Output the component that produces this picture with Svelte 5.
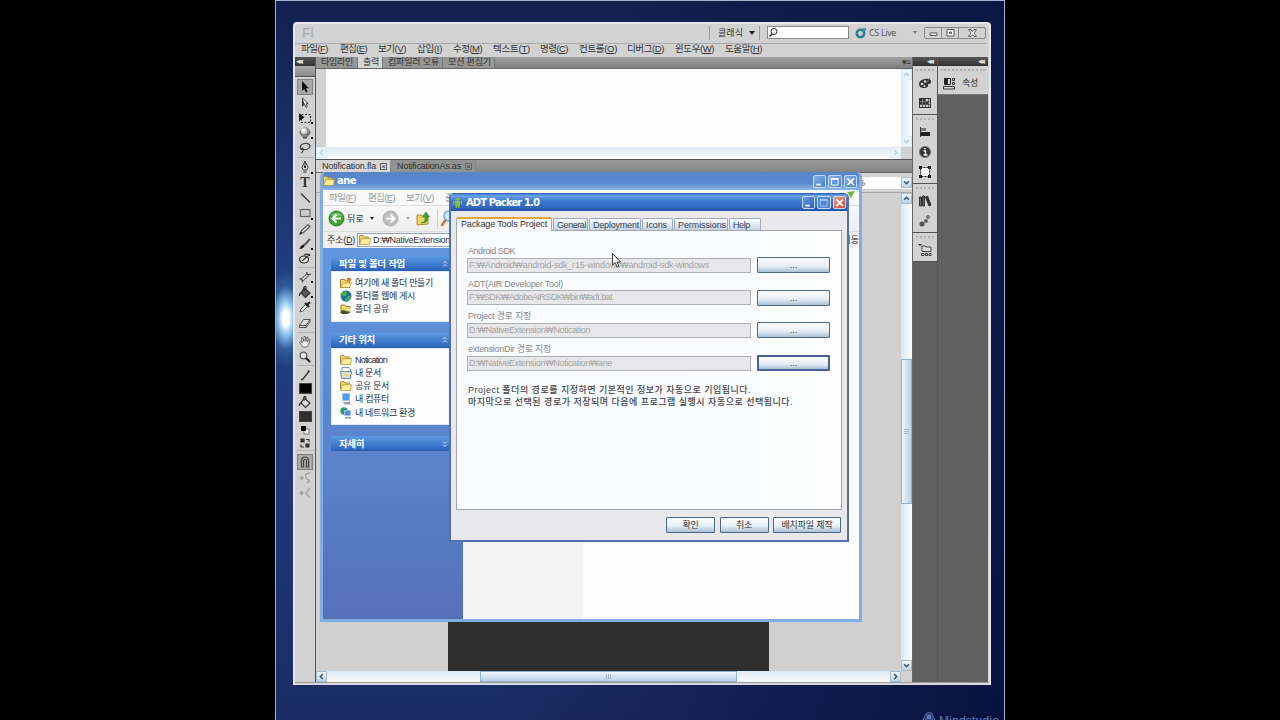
<script>
    const menus = [
        { text: '파일', key: 'F', w: 27, slot: 39 },
        { text: '편집', key: 'E', w: 27, slot: 38 },
        { text: '보기', key: 'V', w: 28, slot: 39 },
        { text: '삽입', key: 'I', w: 25, slot: 36 },
        { text: '수정', key: 'M', w: 29, slot: 40 },
        { text: '텍스트', key: 'T', w: 37, slot: 47 },
        { text: '명령', key: 'C', w: 28, slot: 39 },
        { text: '컨트롤', key: 'O', w: 38, slot: 48 },
        { text: '디버그', key: 'D', w: 37, slot: 48 },
        { text: '윈도우', key: 'W', w: 39, slot: 50 },
        { text: '도움말', key: 'H', w: 37, slot: 40 }
    ];

    // h is the height of the slot in the tool column
    const tools = [
        { icon: 'select', h: 16, on: true },
        { icon: 'subselect', h: 15 },
        { icon: 'transform', h: 15, more: true },
        { icon: 'sphere', h: 15, more: true },
        { icon: 'lasso', h: 16 },
        { line: true },
        { icon: 'pen', h: 16, more: true },
        { icon: 'text', h: 15 },
        { icon: 'line', h: 15 },
        { icon: 'rect', h: 16, more: true },
        { icon: 'pencil', h: 15 },
        { icon: 'brush', h: 15, more: true },
        { icon: 'deco', h: 15 },
        { line: true },
        { icon: 'bone', h: 15, more: true },
        { icon: 'bucket', h: 15, more: true },
        { icon: 'dropper', h: 16 },
        { icon: 'eraser', h: 16 },
        { line: true },
        { icon: 'hand', h: 15 },
        { icon: 'zoom', h: 15 },
        { line: true },
        { icon: 'stroke', h: 15 },
        { swatch: '#000', h: 13 },
        { icon: 'bucketSmall', h: 14 },
        { swatch: '#2f2f2f', h: 14 },
        { icon: 'mono', h: 13 },
        { icon: 'swap', h: 11 },
        { line: true, wide: true },
        { icon: 'magnet', h: 16, on: true },
        { icon: 'smooth', h: 15 },
        { icon: 'straight', h: 15 }
    ];

    const dock = [
        ['palette', 'grid'],
        ['align', 'info', 'box'],
        ['books', 'dots'],
        ['folders']
    ];

    const tasks = [
        { icon: 'newfolder', text: '여기에 새 폴더 만들기', w: 78 },
        { icon: 'globe', text: '폴더를 웹에 게시', w: 60 },
        { icon: 'share', text: '폴더 공유', w: 34 }
    ];
    const places = [
        { icon: 'folder', text: 'Notication', w: 32 },
        { icon: 'docs', text: '내 문서', w: 26 },
        { icon: 'folder', text: '공유 문서', w: 34 },
        { icon: 'computer', text: '내 컴퓨터', w: 34 },
        { icon: 'network', text: '내 네트워크 환경', w: 60 }
    ];

    const tabs = [
        { text: 'General', w: 35, fit: 29 },
        { text: 'Deployment', w: 52, fit: 46 },
        { text: 'Icons', w: 31, fit: 21 },
        { text: 'Permissions', w: 54, fit: 48 },
        { text: 'Help', w: 32, fit: 17 }
    ];
    const fields = [
        { label: 'Android SDK', lw: 47, value: 'F:₩Android₩android-sdk_r15-windows₩android-sdk-windows', vw: 240 },
        { label: 'ADT(AIR Developer Tool)', lw: 95, value: 'F:₩SDK₩AdobeAIRSDK₩bin₩adt.bat', vw: 143 },
        { label: 'Project 경로 지정', lw: 63, value: 'D:₩NativeExtension₩Notication', vw: 121 },
        { label: 'extensionDir 경로 지정', lw: 83, value: 'D:₩NativeExtension₩Notication₩ane', vw: 143, focus: true }
    ];

    // spreads or tightens the letters so the text fills the given width
    function fit(node, width) {
        const natural = node.getBoundingClientRect().width;
        const count = node.textContent.trim().length;
        node.style.letterSpacing = (width - natural) / count + 'px';
    }
</script>

{#snippet folder()}
    <svg width="12" height="10" viewBox="0 0 12 10">
        <path d="M.5 8.500V1.500q0-1 1-1h2.500l1 1.500h4.500v1.500" fill="#efd36c" stroke="#a98a35" />
        <path d="M.7 9.500 2.500 3.700h9l-1 5.800z" fill="#ffee9c" stroke="#b49237" stroke-width=".8" />
    </svg>
{/snippet}

{#snippet toolIcon(name)}
    <svg width="14" height="14" viewBox="0 0 14 14" fill="none" stroke="#333" stroke-width="1.2">
        {#if name === 'select'}
            <path d="M4 1v10l2.300-2 1.600 3.500 1.700-.8L8 8.300h3z" fill="#111" stroke="none" />
        {:else if name === 'subselect'}
            <path d="M4.500 2v8l2-1.700 1.500 3 1.300-.6-1.400-3h2.400z" fill="#eee" stroke="#333" stroke-width=".9" />
            <path d="M4.500 2v8l2-1.700z" fill="#333" stroke="none" />
        {:else if name === 'transform'}
            <rect x="3.500" y="3.500" width="9" height="8" stroke-dasharray="2 1.500" />
            <path d="M1 2v8l5.500-3.500z" fill="#111" stroke="none" />
        {:else if name === 'sphere'}
            <circle cx="7" cy="6.500" r="4.800" fill="#8a8a8a" stroke="#666" stroke-width=".6" />
            <path d="M1 6q6 5 12 0" stroke="#555" stroke-width=".8" />
            <circle cx="6" cy="5" r="3.200" fill="#cfcfcf" stroke="none" />
            <circle cx="5.500" cy="4.300" r="1.700" fill="#fff" stroke="none" />
            <path d="M5 11h4v1.500H5z" fill="#444" stroke="none" />
        {:else if name === 'lasso'}
            <path d="M4 9C1 7 2 3 7 2.500s7 3.500 2.500 5.500C7 9 4 9 4 7.500S6 8 5 10s-2 2-2 2" stroke="#444" />
        {:else if name === 'pen'}
            <path d="m7 1-3 6.500 1.500 2.500h3L10 7.500zM7 2v5M5.500 12h3" fill="#eee" stroke-width="1" />
            <circle cx="7" cy="7" r=".7" fill="#222" />
        {:else if name === 'line'}
            <path d="m3 2.500 9 9" />
        {:else if name === 'rect'}
            <rect x="2.500" y="3.500" width="9.500" height="7" fill="#ccc" stroke="#666" />
        {:else if name === 'pencil'}
            <path d="m2 12 1.500-3.500L10 2.500l2 2-6.500 6z" fill="#e8e8e8" stroke="#555" />
            <path d="m2 12 1-2.500 1.500 1.500z" fill="#111" stroke="none" />
        {:else if name === 'brush'}
            <path d="m12 2-6 6.500" stroke="#555" stroke-width="2" />
            <path d="M1.500 12q1-4 4-4.500l1 1.500q-1 3-5 3z" fill="#222" stroke="none" />
        {:else if name === 'deco'}
            <ellipse cx="6" cy="7.500" rx="4.500" ry="3.500" fill="#ddd" />
            <path d="m4 9 8-7M6 3q4-2 6 1" />
        {:else if name === 'bone'}
            <path d="m3.500 10.500 6.500-6" stroke="#555" stroke-width="3.500" />
            <path d="m3.500 10.500 6.500-6" stroke="#eee" stroke-width="1.500" />
            <path d="M1.500 9q2-.5 2.500 1t.5 2.500M8.800 2q-.3 2.500 1.200 2.700t3-.7" stroke="#444" />
        {:else if name === 'bucket' || name === 'bucketSmall'}
            <path d="m6 3 6 5-4.500 4.500L3 8z" fill={name === 'bucket' ? '#555' : '#ddd'} stroke="#333" />
            <path d="M4 8Q1 8 1.500 11M6 6V2q1-1.500 2 0v3" />
        {:else if name === 'dropper'}
            <path d="m2 12 1-3 4.500-4.500 2 2L5 11z" fill="#eee" stroke="#555" stroke-width="1" />
            <path d="m7 3 4 4M8.500 5.500 12 2" stroke="#222" stroke-width="2.200" />
        {:else if name === 'eraser'}
            <path d="m1.500 9.500 4-6h6.500l-4 6zM1.500 9.500v2H8v-2M8 11.500l4-5.500V3.500" fill="#ddd" stroke="#444" stroke-width=".9" />
        {:else if name === 'hand'}
            <path d="M4.500 12 1.500 7l1-.7L4.500 8 3 3l1.300-.5L6 6.500 6 1.500h1.300l.6 5 1-4.500 1.200.3L9.700 7l1.500-3 1 .5-1.500 5L9 12z" fill="#f3f3f3" stroke="#555" stroke-width=".8" />
        {:else if name === 'zoom'}
            <circle cx="5.500" cy="5.500" r="3.300" fill="#eee" stroke="#555" />
            <path d="m8 8 4 4" stroke="#222" stroke-width="2.200" />
        {:else if name === 'stroke'}
            <path d="m3 12 2-1 5.500-7M10 2.500l1.500 1.500" stroke="#333" stroke-width="1.400" />
        {:else if name === 'mono'}
            <rect x="6" y="6" width="5" height="5" fill="#fff" stroke="#555" stroke-width=".8" />
            <rect x="3" y="3" width="5" height="5" fill="#000" stroke="none" />
        {:else if name === 'swap'}
            <path d="M3 3h3v3H3zM8 8h3v3H8z" fill="#333" />
            <path d="M8 3.500h3V6M3 8.500V11h3" />
        {:else if name === 'magnet'}
            <path d="M3.500 12V6q0-4 3.500-4t3.500 4v6h-2V6q0-2-1.500-2T5.500 6v6z" fill="#bbb" stroke="#444" />
        {:else if name === 'smooth'}
            <path d="M1 7h4m-2-2 2 2-2 2M12 2Q7 2 7.500 5t3 4-1.500 3" stroke="#999" />
        {:else if name === 'straight'}
            <path d="M1 7h4m-2-2 2 2-2 2M12 2 8 7l4 5" stroke="#999" />
        {/if}
    </svg>
{/snippet}

{#snippet dockIcon(name)}
    <svg width="14" height="14" viewBox="0 0 14 14" fill="none" stroke="#333">
        {#if name === 'palette'}
            <path d="M1 8q0-4 6-5 6-1 6 3 0 2-3 2 1 4-4 4-5 0-5-4z" fill="#333" stroke="none" />
            <circle cx="4" cy="8" r="1.300" fill="#ddd" stroke="none" />
            <circle cx="7" cy="5.500" r="1.200" fill="#ddd" stroke="none" />
            <circle cx="6.500" cy="10" r="1" fill="#ddd" stroke="none" />
            <path d="m8 7 4-5" stroke="#777" />
        {:else if name === 'grid'}
            <rect x="1.500" y="2.500" width="11" height="9" fill="#ccc" />
            <path d="M2 3h5v5H2zM8 6h2v2H8z" fill="#333" stroke="none" />
            <path d="M1.500 5.500h11M1.500 8.500h11M4.500 3v8M7.500 3v8M10.500 3v8" stroke="#444" stroke-width=".8" />
            <path d="M2 5.500h5M4.500 3v5" stroke="#999" stroke-width=".7" />
        {:else if name === 'align'}
            <path d="M2.500 2v10" />
            <path d="M3 3h5v3H3z" fill="#777" stroke="none" />
            <path d="M3 7h9v4H3z" fill="#222" stroke="none" />
        {:else if name === 'info'}
            <circle cx="7" cy="7" r="5.500" fill="#333" stroke="#777" />
            <path d="M5.500 6H7.500v4M5.500 10h4M7 3v1.500" stroke="#fff" stroke-width="1.500" />
        {:else if name === 'box'}
            <rect x="2.500" y="2.500" width="9" height="9" fill="#fff" stroke="#222" stroke-dasharray="2 1" />
            <path d="M1 1h3v3H1zM10 1h3v3h-3zM1 10h3v3H1zM10 10h3v3h-3z" fill="#222" stroke="none" />
        {:else if name === 'books'}
            <path d="M1.500 3v9h2V3zM4.500 2v10h2V2z" fill="#666" />
            <path d="m7.500 3 3.500 9 2-1-3.500-9z" fill="#333" />
        {:else if name === 'dots'}
            <circle cx="4" cy="10" r="2.500" fill="#555" stroke="none" />
            <circle cx="8" cy="7" r="2" fill="#666" stroke="none" />
            <circle cx="10" cy="3" r="1.500" fill="#999" stroke="#444" stroke-width=".7" />
        {:else if name === 'folders'}
            <path d="M0 1h4L2 3z" fill="#222" stroke="none" />
            <path d="M4 8.500V3h3l1 1h5v4.500zM3.500 10.500h2.500v2H3.500zM7.500 10.500h2v2h-2zM11 10.500h2v2h-2z" fill="#ddd" stroke-width=".9" />
        {/if}
    </svg>
{/snippet}

{#snippet placeIcon(name)}
    {#if name === 'folder'}
        {@render folder()}
    {:else}
        <svg width="12" height="12" viewBox="0 0 12 12">
            {#if name === 'newfolder'}
                <path d="M.5 10.500V2.500h4l1 1.500h4v6.500z" fill="#fbd964" stroke="#a07c2b" />
                <path d="m1 10.500 2-4.500h8.500l-2 4.500z" fill="#fff0a0" stroke="#b98b2c" stroke-width=".7" />
                <path d="M7 1h4v3H7z" fill="#e97a30" />
            {:else if name === 'globe'}
                <circle cx="6" cy="6" r="5.500" fill="#1f66b8" />
                <path d="M2 2q4-2 5 1T4 6 2 8 1 4zM8 6q3-1 3 0t-3 5-3-2z" fill="#43b14b" />
            {:else if name === 'share'}
                <path d="M1 8V2h4l1 1.500h4V8z" fill="#f4d566" stroke="#a07c2b" />
                <path d="M0 9q3-3 5-1l6 1-4 2H2z" fill="#4a4a32" />
                <path d="m5 7 6-2-1 3z" fill="#fff3a8" />
            {:else if name === 'docs'}
                <path d="M2 4V.5h7L10.500 2v3" fill="#fff" stroke="#7d95b5" />
                <path d="M.5 4.500h11l-1 7h-9z" fill="#cfe0e6" stroke="#788" />
                <path d="M3 7h6v2H3z" fill="#f2d771" />
            {:else if name === 'computer'}
                <path d="M2.500.5h7v7h-7z" fill="#4e9cf0" stroke="#a9c0e2" />
                <path d="M3 9h6l1 2.500H4z" fill="#97a6c2" />
                <path d="m7 10 3-2v2.500z" fill="#d36b4a" />
            {:else if name === 'network'}
                <circle cx="4" cy="4" r="3.700" fill="#2a9c6f" />
                <path d="M4.500 3.500h6v5h-6z" fill="#3f93ee" stroke="#a9c0e2" />
                <path d="M5 10h6v1.500H5z" fill="#8496ba" />
            {/if}
        </svg>
    {/if}
{/snippet}

{#snippet arrow(dir)}
    <span class="arrow {dir}">
        <svg width="7" height="7" viewBox="0 0 7 7"><path d="m1 4.800 2.500-2.500L6 4.800" fill="none" stroke="currentColor" stroke-width="1.500" /></svg>
    </span>
{/snippet}

{#snippet winButtons()}
    <div class="win-buttons">
        <i><svg viewBox="0 0 12 12"><path d="M2.500 9h4.500" stroke="#fff" stroke-width="2" /></svg></i>
        <i class="max"><svg viewBox="0 0 12 12"><path d="M2.500 3h7v6.500h-7z" fill="none" stroke="#fff" /><path d="M2 3h8" stroke="#fff" stroke-width="2" /></svg></i>
        <i class="close"><svg viewBox="0 0 12 12"><path d="m2.500 2.500 7 7m0-7-7 7" stroke="#fff" stroke-width="1.800" /></svg></i>
    </div>
{/snippet}

{#snippet chevrons(flip)}
    <svg class:flip width="6" height="8" viewBox="0 0 6 8" fill="none" stroke="#cfe1f8"><path d="m1 3.500 2-2 2 2M1 6.500l2-2 2 2" /></svg>
{/snippet}

<div class="screen">
    <div class="desktop">
        <div class="glow"></div>
        <div class="brand">
            <svg width="14" height="12" viewBox="0 0 14 12" fill="none" stroke="#6079b5"><circle cx="7" cy="5" r="4.200" /><rect x="5" y="3" width="4" height="4" fill="#6079b5" /><path d="M1 6q1 5 6 5t6-5" /></svg>
            <span use:fit={60}>Mindstudio</span>
        </div>

        <div class="flash">
            <header class="app-bar">
                <span class="logo">Fl</span>
                <div class="workspace"><span use:fit={25}>클래식</span><b class="caret"></b></div>
                <div class="search">
                    <svg width="11" height="11" viewBox="0 0 11 11" fill="none" stroke="#222"><circle cx="6" cy="4.500" r="3" /><path d="M4 7 1.500 9.500" stroke-width="1.500" /></svg>
                </div>
                <div class="live">
                    <svg width="12" height="12" viewBox="0 0 12 12"><circle cx="5.500" cy="6.500" r="3.700" fill="none" stroke="#2b8296" stroke-width="2.600" /><circle cx="9.500" cy="2.500" r="1.800" fill="#3a9db3" /></svg>
                    <span use:fit={27}>CS Live</span>
                    <b class="caret small"></b>
                </div>
                <div class="app-buttons">
                    <i><svg width="9" height="8" viewBox="0 0 9 8"><path d="M1 4h7v2.500H1z" fill="#fff" stroke="#555" /></svg></i>
                    <i><svg width="9" height="8" viewBox="0 0 9 8"><path d="M1 .5h7v6.500H1zM3.500 3h2v1.500h-2z" fill="#fff" stroke="#555" /></svg></i>
                    <i class="wide"><svg width="9" height="8" viewBox="0 0 9 8"><path d="M.5.5h2.500l1.500 2L6 .5h2.500L6 4l2.500 3.500H6l-1.500-2-1.500 2H.5L3 4z" fill="#fff" stroke="#555" stroke-width=".9" /></svg></i>
                </div>
            </header>
            <nav class="menu">
                {#each menus as m}
                    <div style="width: {m.slot}px"><span use:fit={m.w}>{m.text}(<u>{m.key}</u>)</span></div>
                {/each}
            </nav>

            <div class="work">
                <aside class="tools">
                    <div class="dark-head left">◂◂</div>
                    <div class="tools-cap"></div>
                    {#each tools as t}
                        {#if t.line}
                            <hr class:wide={t.wide} />
                        {:else}
                            <div class="tool" class:on={t.on} style="height: {t.h}px">
                                {#if t.swatch}
                                    <b class="swatch" style="background: {t.swatch}"></b>
                                {:else if t.icon === 'text'}
                                    <strong>T</strong>
                                {:else}
                                    {@render toolIcon(t.icon)}
                                {/if}
                                {#if t.more}<em></em>{/if}
                            </div>
                        {/if}
                    {/each}
                </aside>

                <main>
                    <div class="panel-tabs">
                        <div style="width: 42px"><span use:fit={32}>타임라인</span></div>
                        <div class="current" style="width: 25px"><span use:fit={16}>출력</span></div>
                        <div style="width: 60px"><span use:fit={51}>컴파일러 오류</span></div>
                        <div style="width: 52px"><span use:fit={43}>모션 편집기</span></div>
                        <span class="panel-menu">▾≡</span>
                    </div>
                    <div class="output">
                        <div class="output-row">
                            <div class="margin"></div>
                            <div class="text-area"></div>
                            <div class="scroll-v pale">{@render arrow('up')}{@render arrow('down')}</div>
                        </div>
                        <div class="scroll-h pale">{@render arrow('left')}{@render arrow('right')}</div>
                    </div>
                    <div class="doc-tabs">
                        <div class="current" style="width: 75px"><span use:fit={54}>Notification.fla</span><i>×</i></div>
                        <div style="width: 85px"><span use:fit={64}>NotificationAs.as</span><i>×</i></div>
                    </div>
                    <div class="edit-bar">
                        <div class="zoom-box"><span>100%</span>{@render arrow('down')}</div>
                    </div>
                    <div class="canvas-row">
                        <div class="canvas"><div class="stage"></div></div>
                        <div class="scroll-v">
                            {@render arrow('up')}
                            <div class="thumb"><svg width="5" height="6" viewBox="0 0 5 6"><path d="M0 .5h5M0 2.500h5M0 4.500h5" stroke="#9ab" stroke-width=".8" /></svg></div>
                            {@render arrow('down')}
                        </div>
                    </div>
                    <div class="scroll-h">
                        {@render arrow('left')}
                        <div class="thumb"><svg width="6" height="5" viewBox="0 0 6 5"><path d="M.5 0v5M2.500 0v5M4.500 0v5" stroke="#9ab" stroke-width=".8" /></svg></div>
                        {@render arrow('right')}
                    </div>
                </main>

                <aside class="dock">
                    <div class="dark-head">◂◂</div>
                    {#each dock as group}
                        <div class="dock-group">
                            <div class="grip"></div>
                            {#each group as name}
                                <div class="dock-item">{@render dockIcon(name)}</div>
                            {/each}
                        </div>
                    {/each}
                </aside>
                <aside class="props">
                    <div class="dark-head">◂◂</div>
                    <div class="props-body">
                        <div class="grip"></div>
                        <div class="props-item">
                            <svg width="13" height="13" viewBox="0 0 13 13" fill="#ddd" stroke="#222"><path d="M1.500 1.500h6v6h-6z" /><path d="M1.500 1.500h3v5h-3z" fill="#222" /><path d="M9.500 1.500h2v2h-2zM9.500 5.500h2v2h-2zM.5 9.500h11v2.500H.5z" stroke-width=".9" /></svg>
                            <span use:fit={16}>속성</span>
                        </div>
                    </div>
                </aside>
            </div>
        </div>

        <div class="explorer">
            <div class="title">{@render folder()}<span use:fit={19}>ane</span>{@render winButtons()}</div>
            <div class="ex-menu">
                {#each menus.slice(0, 3) as m}
                    <div style="width: {m.slot}px"><span use:fit={m.w}>{m.text}(<u>{m.key}</u>)</span></div>
                {/each}
                <div class="clipped"><span>즐</span></div>
                <svg class="flag" width="10" height="14" viewBox="0 0 10 14"><path d="m0 2 8-1-4 7z" fill="#79b236" /></svg>
            </div>
            <div class="ex-tools">
                <svg width="17" height="17" viewBox="0 0 17 17"><circle cx="8.500" cy="8.500" r="7.500" fill="#3fa535" stroke="#2c8127" /><path d="M2.500 6a6.500 5 0 0 1 12 0z" fill="#8fd27f" opacity=".7" /><path d="M13 8.500H5m3.500-4-4 4 4 4" fill="none" stroke="#fff" stroke-width="2" /></svg>
                <span class="back" use:fit={17}>뒤로</span><b class="caret small black"></b>
                <svg class="fwd" width="17" height="17" viewBox="0 0 17 17"><circle cx="8.500" cy="8.500" r="7.500" fill="#bdbdbd" stroke="#aaa" /><path d="M4 8.500h8m-3.500-4 4 4-4 4" fill="none" stroke="#fff" stroke-width="2" /></svg>
                <b class="caret small light"></b>
                <svg class="up" width="14" height="15" viewBox="0 0 14 15"><path d="M1 14V4h4l1 1h6v8z" fill="#efd468" stroke="#a68936" /><path d="M5 12q5-1 4-6H6.500L10 1l3.500 5H11.500q1 6-6.500 6z" fill="#40a436" stroke="#2b8027" stroke-width=".6" /></svg>
                <svg class="find" width="18" height="18" viewBox="0 0 18 18"><circle cx="9" cy="6" r="5" fill="#d3e8fb" stroke="#7f9fc7" stroke-width="1.500" /><path d="m5.500 10-4 6" stroke="#b97d4c" stroke-width="2.500" /></svg>
            </div>
            <div class="ex-address">
                <span use:fit={28}>주소(<u>D</u>)</span>
                <div class="address-box">{@render folder()}<span use:fit={77}>D:₩NativeExtension</span></div>
                <span class="go">이동</span>
            </div>
            <div class="ex-body">
                <div class="side">
                    <section>
                        <h2><span use:fit={66}>파일 및 폴더 작업</span>{@render chevrons(false)}</h2>
                        <ul>
                            {#each tasks as t}
                                <li>{@render placeIcon(t.icon)}<span use:fit={t.w}>{t.text}</span></li>
                            {/each}
                        </ul>
                    </section>
                    <section>
                        <h2><span use:fit={36}>기타 위치</span>{@render chevrons(false)}</h2>
                        <ul>
                            {#each places as p}
                                <li>{@render placeIcon(p.icon)}<span use:fit={p.w}>{p.text}</span></li>
                            {/each}
                        </ul>
                    </section>
                    <section>
                        <h2><span use:fit={25}>자세히</span>{@render chevrons(true)}</h2>
                    </section>
                </div>
                <div class="files"></div>
            </div>
        </div>

        <div class="dialog">
            <div class="title">
                <svg width="9" height="11" viewBox="0 0 9 11"><path d="M2 3.500Q2 1 4.500 1T7 3.500zM2 4h5v5H2zM0 4h1.300v3.500H0zM7.700 4H9v3.500H7.700zM2.700 9h1.300v2H2.700zM5 9h1.300v2H5z" fill="#8bc034" /></svg>
                <span use:fit={73}>ADT Packer 1.0</span>
                {@render winButtons()}
            </div>
            <div class="tabs">
                <div class="active"><span use:fit={86}>Package Tools Project</span></div>
                {#each tabs as t}
                    <div style="width: {t.w}px"><span use:fit={t.fit}>{t.text}</span></div>
                {/each}
            </div>
            <div class="pane">
                {#each fields as f}
                    <div class="field">
                        <label for={f.label}><span use:fit={f.lw}>{f.label}</span></label>
                        <div class="field-row">
                            <div class="input" id={f.label}><span use:fit={f.vw}>{f.value}</span></div>
                            <button class:focus={f.focus}>...</button>
                        </div>
                    </div>
                {/each}
                <p>
                    <span use:fit={283}>Project 폴더의 경로를 지정하면 기본적인 정보가 자동으로 기입됩니다.</span><br />
                    <span use:fit={325}>마지막으로 선택된 경로가 저장되며 다음에 프로그램 실행시 자동으로 선택됩니다.</span>
                </p>
            </div>
            <footer>
                <button style="width: 49px"><span use:fit={16}>확인</span></button>
                <button style="width: 49px"><span use:fit={16}>취소</span></button>
                <button style="width: 68px"><span use:fit={51}>배치파일 제작</span></button>
            </footer>
        </div>

        <svg class="cursor" width="10" height="15" viewBox="0 0 10 15"><path d="M.5.5v11.500l2.700-2.500 1.800 4.500 1.800-.8-1.800-4.200h3.500z" fill="#fff" stroke="#222" stroke-width=".9" /></svg>
    </div>
</div>

<style>
    :global(body) {
        background: #000;
    }
    .screen {
        height: 720px;
        display: flex;
        justify-content: center;
        background: #000;
        overflow: hidden;
        font: 9px/12px 'Liberation Sans', 'Noto Sans CJK KR', sans-serif;
        color: #333;
    }
    .screen :global(*) {
        box-sizing: border-box;
    }
    .screen :global(svg) {
        display: block;
        flex: none;
    }
    .screen span {
        display: inline-block;
        white-space: nowrap;
    }
    i, em {
        font-style: normal;
    }
    .desktop {
        position: relative;
        width: 730px;
        height: 720px;
        overflow: hidden;
        border: 1px solid #a3b3d4;
        border-bottom: none;
        background: linear-gradient(100deg, transparent 40%, #08123f 100%), linear-gradient(#13204f, #213f80 40%, #1c3575 75%, #1b2c63);
    }
    .glow {
        position: absolute;
        left: -12px;
        top: 268px;
        width: 44px;
        height: 98px;
        background: radial-gradient(closest-side, #fff 15%, #8cc4ee 35%, #3f78bd80 65%, transparent);
    }
    .brand {
        position: absolute;
        left: 646px;
        top: 711px;
        display: flex;
        gap: 3px;
        color: #6079b5;
        font-size: 12px;
        line-height: 18px;
    }

    /* main application window */
    .flash {
        position: absolute;
        left: 17px;
        top: 21px;
        width: 698px;
        height: 663px;
        display: flex;
        flex-direction: column;
        background: #d2d2d2;
        border: 2px solid #e6e8ee;
        border-bottom-color: #d7d9de;
        border-radius: 4px 4px 0 0;
    }
    .app-bar {
        display: flex;
        align-items: center;
        height: 20px;
        flex: none;
        padding: 0 1px 2px 7px;
        border-bottom: 1px solid #a9a9a9;
        margin-right: 2px;
    }
    .logo {
        flex: 1;
        color: #aaa;
        font-size: 14px;
    }
    .workspace {
        display: flex;
        align-items: center;
        gap: 6px;
        height: 14px;
        width: 51px;
        padding-left: 8px;
        border: solid #999;
        border-width: 0 1px;
    }
    .caret {
        border: 3px solid transparent;
        border-top: 4px solid #222;
        border-bottom: 0;
    }
    .caret.small {
        border-width: 3px 2.5px 0;
        border-top-color: #777;
    }
    .caret.black {
        border-top-color: #222;
    }
    .caret.light {
        border-top-color: #aaa;
    }
    .search {
        width: 82px;
        height: 13px;
        margin-left: 7px;
        border: 1px solid #888;
        background: #fff;
    }
    .live {
        display: flex;
        align-items: center;
        width: 75px;
        padding-left: 6px;
        gap: 2px;
        font-family: 'Open Sans', sans-serif;
        color: #555;
    }
    .live .caret {
        margin-left: 15px;
    }
    .app-buttons {
        display: flex;
        width: 62px;
        height: 12px;
        border: 1px solid #888;
        border-radius: 2px;
    }
    .app-buttons i {
        width: 17px;
        display: grid;
        place-items: center;
        border-right: 1px solid #888;
    }
    .app-buttons .wide {
        width: 26px;
        border: none;
    }
    .menu {
        display: flex;
        height: 13px;
        flex: none;
        padding-left: 6px;
        font-size: 9.5px;
        line-height: 9px;
    }
    .work {
        display: flex;
        flex: 1;
        min-height: 0;
        border-bottom: 1px solid #999;
    }
    .dark-head {
        height: 9px;
        background: linear-gradient(#555, #333);
        color: #ddd;
        font: 9px/8px 'DejaVu Sans', sans-serif;
        letter-spacing: -2px;
        text-align: right;
        padding-right: 5px;
        overflow: hidden;
        flex: none;
    }
    .dark-head.left {
        text-align: left;
        padding-left: 1px;
    }
    .tools {
        width: 21px;
        border-right: 1px solid #555;
        display: flex;
        flex-direction: column;
    }
    .tools-cap {
        height: 11px;
        margin-bottom: 2px;
        border-bottom: 1px solid #555;
        background: linear-gradient(#aaa, #8b8b8b);
        flex: none;
    }
    hr {
        width: 17px;
        margin: 1px auto 1px;
        border: 0;
        border-top: 1px solid #b2b2b2;
    }
    hr.wide {
        margin: 3px auto;
    }
    .tool {
        position: relative;
        display: grid;
        place-items: center;
        width: 16px;
        margin: 0 auto;
        flex: none;
    }
    .tool.on {
        background: #a9a9a9;
        border: 1px solid #808080;
    }
    .tool em {
        position: absolute;
        right: 0;
        bottom: 1px;
        width: 2px;
        height: 2px;
        background: #111;
    }
    .tool strong {
        font: bold 14px/14px 'Liberation Serif', serif;
    }
    .swatch {
        width: 13px;
        height: 11px;
        border: 1px solid #444;
    }
    main {
        width: 597px;
        display: flex;
        flex-direction: column;
        border-right: 1px solid #666;
    }
    .panel-tabs {
        display: flex;
        height: 12px;
        flex: none;
        border-bottom: 1px solid #666;
        background: linear-gradient(#a0a0a0, #808080);
    }
    .panel-tabs div {
        border-right: 1px solid #777;
        padding-left: 5px;
        line-height: 11px;
        background: #979797;
    }
    .panel-tabs .current {
        background: #d6d6d6;
    }
    .panel-tabs .panel-menu {
        margin-left: auto;
        letter-spacing: -1px;
        padding-right: 2px;
        line-height: 11px;
    }
    .output {
        height: 91px;
        flex: none;
        display: flex;
        flex-direction: column;
        border-bottom: 1px solid #555;
    }
    .output-row {
        display: flex;
        flex: 1;
    }
    .margin {
        width: 10px;
    }
    .text-area {
        flex: 1;
        background: #fdfdfd;
    }
    .arrow {
        width: 11px;
        height: 11px;
        flex: none;
        color: #3c5468;
        border: 1px solid #a9bdcd;
        background: linear-gradient(#f3f8fd, #bdd3e4);
    }
    .screen .arrow {
        display: grid;
        place-items: center;
    }
    .arrow.down :global(svg) { transform: rotate(180deg); }
    .arrow.left :global(svg) { transform: rotate(-90deg); }
    .arrow.right :global(svg) { transform: rotate(90deg); }
    .pale .arrow {
        color: #b5cfe2;
        border-color: #dcebf5;
        background: #eaf4fb;
    }
    .scroll-v {
        display: flex;
        flex-direction: column;
        justify-content: space-between;
        width: 11px;
        background: linear-gradient(90deg, #dbe9f2, #f9fcff);
    }
    .scroll-h {
        display: flex;
        justify-content: space-between;
        height: 11px;
        flex: none;
        margin-right: 11px;
        background: linear-gradient(#dde8f1, #f9fcff);
    }
    .output .scroll-h {
        height: 12px;
    }
    .scroll-v .thumb, .scroll-h .thumb {
        display: grid;
        place-items: center;
        border: 1px solid #93b0ce;
        background: linear-gradient(90deg, #f0f6fc, #b9d1ea);
    }
    .scroll-v .thumb {
        height: 145px;
        margin-bottom: 1px;
    }
    .scroll-h .thumb {
        width: 257px;
        background: linear-gradient(#f0f6fc, #b9d1ea);
    }
    .doc-tabs {
        display: flex;
        height: 13px;
        flex: none;
        border-bottom: 1px solid #666;
        background: linear-gradient(#9a9a9a, #858585);
    }
    .doc-tabs div {
        display: flex;
        align-items: center;
        justify-content: space-between;
        padding: 0 3px 0 6px;
        border-right: 1px solid #888;
        background: #929292;
    }
    .doc-tabs .current {
        background: #d6d6d6;
    }
    .doc-tabs i {
        width: 7px;
        height: 7px;
        border: 1px solid #666;
        font-size: 8px;
        line-height: 5px;
        text-align: center;
    }
    .edit-bar {
        height: 20px;
        flex: none;
        display: flex;
        justify-content: flex-end;
        padding-top: 4px;
        border-bottom: 1px solid #aaa;
    }
    .zoom-box {
        width: 80px;
        height: 12px;
        display: flex;
        justify-content: space-between;
        background: #fff;
        padding-left: 10px;
        line-height: 13px;
    }
    .canvas-row {
        display: flex;
        flex: 1;
        min-height: 0;
    }
    .canvas {
        flex: 1;
        display: flex;
        background: #d0d0d0;
    }
    .stage {
        width: 321px;
        margin-left: 132px;
        background: #2f2f2f;
    }
    .dock {
        width: 25px;
        background: #606060;
        border-right: 1px solid #555;
    }
    .dock-group {
        background: #d2d2d2;
        border-bottom: 1px solid #555;
        padding-bottom: 1px;
    }
    .grip {
        height: 7px;
        border-bottom: 2px dotted #b0b0b0;
        margin: 0 3px;
        transform: translateY(-2px);
    }
    .dock-item {
        height: 20px;
        display: grid;
        place-items: center;
    }
    .props {
        flex: 1;
        background: #606060;
        margin-right: 1px;
    }
    .props-body {
        background: #d2d2d2;
        height: 29px;
        border-bottom: 1px solid #777;
    }
    .props-item {
        display: flex;
        align-items: center;
        gap: 6px;
        height: 20px;
        padding-left: 5px;
    }

    /* XP style windows */
    .title {
        display: flex;
        align-items: center;
        flex: none;
        height: 18px;
        color: #fff;
        font: bold 10px/16px 'DejaVu Sans', sans-serif;
    }
    .win-buttons {
        display: flex;
        gap: 2px;
        margin-left: auto;
    }
    .win-buttons i {
        width: 13.5px;
        height: 13px;
        border: 1px solid #c7daf6;
        border-radius: 2px;
        background: linear-gradient(135deg, #6f9ce0, #2c5fb9);
    }
    .explorer {
        position: absolute;
        left: 44px;
        top: 171px;
        width: 542px;
        height: 450px;
        display: flex;
        flex-direction: column;
        border: 3px solid #80aee2;
        border-top: 0;
        border-radius: 5px 5px 0 0;
        background: #fdfdfd;
        overflow: hidden;
    }
    .explorer .title {
        padding: 0 2px 0 0;
        gap: 2px;
        background: linear-gradient(#5985c8, #5688d2 60%, #8cb8e6);
    }
    .explorer .win-buttons i {
        background: linear-gradient(135deg, #86b0e6, #4a80cc);
    }
    .ex-menu {
        position: relative;
        display: flex;
        height: 15px;
        flex: none;
        padding-left: 6px;
        color: #999;
        background: #f8f9fb;
        font-size: 9.5px;
        line-height: 15px;
    }
    .clipped {
        width: 6px;
        overflow: hidden;
    }
    .flag {
        position: absolute;
        right: 2px;
        top: 0;
    }
    .ex-tools {
        display: flex;
        align-items: center;
        height: 27px;
        flex: none;
        padding-left: 5px;
        border: solid #ddd;
        border-width: 1px 0;
        background: linear-gradient(#f9f9f9, #ededed);
    }
    .back {
        margin: 0 6px 0 2px;
    }
    .fwd {
        margin: 0 7px 0 8px;
    }
    .ex-tools .up {
        margin: 0 7px 0 6px;
    }
    .ex-tools .find {
        border-left: 1px solid #ccc;
        box-sizing: content-box;
        padding-left: 2px;
    }
    .ex-address {
        display: flex;
        align-items: center;
        gap: 2px;
        height: 16px;
        flex: none;
        padding: 0 0 0 4px;
        background: #f0f0f0;
    }
    .address-box {
        display: flex;
        align-items: center;
        gap: 2px;
        flex: 1;
        height: 14px;
        padding-left: 1px;
        border: 1px solid #8fa6c4;
        background: #fff;
    }
    .ex-body {
        display: flex;
        flex: 1;
    }
    .side {
        width: 140px;
        padding: 8px 12px 0 8px;
        background: linear-gradient(#6398df, #5a87d2 40%, #5a82ca 60%, #5570b8);
    }
    section {
        margin-bottom: 11px;
    }
    h2 {
        display: flex;
        align-items: center;
        justify-content: space-between;
        height: 15px;
        margin: 0;
        padding: 1px 3px 0 8px;
        border-bottom: 1px solid #2b5fb3;
        background: linear-gradient(#5d9ae3, #2d66bd);
        color: #fff;
        font-size: 9.5px;
        line-height: 14px;
    }
    .flip {
        transform: rotate(180deg);
    }
    ul {
        margin: 0;
        padding: 4px 0 5px 8px;
        list-style: none;
        background: #fdfdfd;
        border: 1px solid #dfe9f8;
    }
    li {
        display: flex;
        align-items: center;
        gap: 3px;
        height: 13.3px;
        color: #223049;
    }
    .files {
        flex: 1;
        background: linear-gradient(90deg, #f4f4f4 120px, #fdfdfd 120px);
    }

    .dialog {
        position: absolute;
        left: 173px;
        top: 192px;
        width: 400px;
        height: 349px;
        display: flex;
        flex-direction: column;
        border: 2px solid #4f71ad;
        border-top: 0;
        border-radius: 5px 5px 0 0;
        background: #e9e9eb;
        overflow: hidden;
    }
    .dialog .title {
        padding: 1px 1px 0 2px;
        gap: 4px;
        background: linear-gradient(#2b5cb0, #6ba3ea 15%, #3c78cf 45%, #3069c0 80%, #2451a0);
    }
    .dialog .close {
        background: linear-gradient(135deg, #ec9a80, #c8452c);
    }
    .dialog .max {
        background: #4c86d8;
    }
    .dialog .max :global(svg) {
        opacity: 0.5;
    }
    .tabs {
        display: flex;
        align-items: flex-end;
        height: 19px;
        flex: none;
        padding-left: 5px;
        color: #384452;
    }
    .tabs div {
        height: 12px;
        padding-left: 3px;
        border: 1px solid #9cabc0;
        border-bottom: 0;
        border-radius: 2px 2px 0 0;
        background: linear-gradient(#fff, #c4d3e4);
        margin-right: 1px;
        line-height: 12px;
    }
    .tabs .active {
        height: 14px;
        width: 96px;
        padding-left: 4px;
        position: relative;
        top: 1px;
        background: #fbfbfe;
        border-top: 2px solid #e9a63a;
        color: #333;
        line-height: 10px;
    }
    .pane {
        width: 386px;
        height: 280px;
        margin-left: 5px;
        padding: 14px 10px;
        border: 1px solid #a2a5ad;
        background: linear-gradient(90deg, #fbfbfd, #f8fbff 6%, #fbfcff 90%, #fff);
    }
    .field {
        height: 32.7px;
        color: #888;
    }
    label {
        display: block;
        height: 12px;
        padding-left: 1px;
        line-height: 13px;
    }
    .field-row {
        display: flex;
        align-items: center;
        gap: 6px;
    }
    .input {
        width: 284px;
        height: 15px;
        padding-left: 1px;
        border: 1px solid #b0b0b4;
        background: #e7e7e9;
        color: #a4a4a4;
        line-height: 12px;
    }
    button {
        height: 16px;
        width: 73px;
        padding: 0;
        border: 1px solid #4c6886;
        border-radius: 1px;
        background: linear-gradient(#f6f9fc 20%, #e3edf4 60%, #a9c0d4);
        font: inherit;
        color: #333;
    }
    button.focus {
        border: 2px solid #4a6192;
    }
    p {
        margin: 8px 0 0 1px;
        color: #444;
        font-weight: 500;
    }
    footer {
        display: flex;
        justify-content: flex-end;
        gap: 4.500px;
        padding: 7px 6px 0 0;
    }
    .cursor {
        position: absolute;
        left: 336px;
        top: 252px;
    }
</style>
